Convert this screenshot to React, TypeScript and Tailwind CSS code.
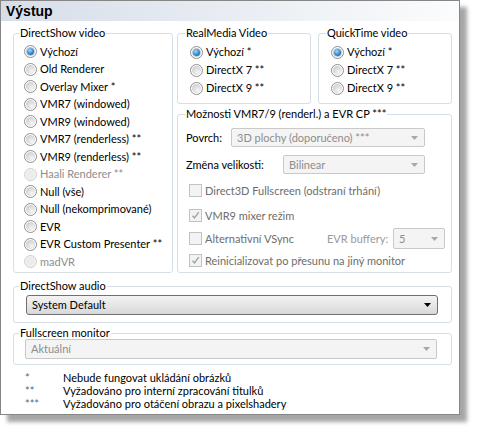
import clsx from "clsx";

function Radio({ label, checked, disabled, h = "h-[17.5px]" }: { label: string; checked?: boolean; disabled?: boolean; h?: string }) {
  return (
    <div className={clsx("flex items-center gap-[3px]", h)}>
      <span
        className={clsx(
          "flex h-[13px] w-[13px] shrink-0 items-center justify-center rounded-full border",
          disabled ? "border-[#cfcfcf] bg-[#f4f4f4]" : "border-[#8e8f8f] bg-white"
        )}
      >
        {checked ? (
          <span className="h-[7px] w-[7px] rounded-full bg-[radial-gradient(circle_at_40%_35%,#a6dcf7,#2f86cc_55%,#0d4c8e)] shadow-[0_0_0_1px_#b9c6d2]" />
        ) : (
          <span
            className={clsx(
              "h-[9px] w-[9px] rounded-full",
              disabled ? "bg-[#ececec]" : "bg-[radial-gradient(circle_at_65%_70%,#f6f6f6,#d2d2d2_70%,#c4c4c4)]"
            )}
          />
        )}
      </span>
      <span className={clsx("whitespace-nowrap", disabled ? "text-[#8d8d8d]" : "text-black")}>{label}</span>
    </div>
  );
}

function Check({ label, checked }: { label: string; checked?: boolean }) {
  return (
    <div className="flex h-[17px] items-center gap-[3px]">
      <span className="flex h-[13px] w-[13px] shrink-0 items-center justify-center border border-[#c2c2c2] bg-[#f3f3f3]">
        {checked && (
          <svg width="9" height="9" viewBox="0 0 9 9">
            <path d="M1.5 4.8 L3.5 7 L7.8 1.2" stroke="#a3a3a3" strokeWidth="1.4" fill="none" />
          </svg>
        )}
      </span>
      <span className="whitespace-nowrap text-[#6d6d6d]">{label}</span>
    </div>
  );
}

function Combo({ value, w, h = "h-[19px]", enabled }: { value: string; w: string; h?: string; enabled?: boolean }) {
  return (
    <div
      className={clsx(
        "flex items-center justify-between border pl-[5px] pr-[6px]",
        w,
        h,
        enabled
          ? "rounded-[3px] border-[#707070] bg-gradient-to-b from-[#f3f3f3] via-[#e6e6e6] to-[#d8d8d8] text-black"
          : "rounded-[2px] border-[#c9c9c9] bg-[#f4f4f4] text-[#8d8d8d]"
      )}
    >
      <span className="whitespace-nowrap">{value}</span>
      <svg width="7" height="4" viewBox="0 0 7 4">
        <path d="M0 0 H7 L3.5 4 Z" fill={enabled ? "#000" : "#a8a8a8"} />
      </svg>
    </div>
  );
}

export default function App() {
  return (
    <div className="h-[433px] w-[478px] bg-white font-['Lato',sans-serif] text-[11px] leading-[16px] text-black">
      <div className="h-[415px] w-[460px] border border-[#868686] bg-white shadow-[7px_7px_4px_rgba(0,0,0,0.35)]">
        <div className="flex h-[20px] items-center bg-gradient-to-r from-[#d6dee9] to-[#fbfcfd] pl-[5px] font-['Liberation_Sans',sans-serif] text-[14px] font-bold">
          Výstup
        </div>

        <div className="pl-[12px] pr-[7px] pt-[4px]">
          <div className="flex gap-[4px]">
            <fieldset className="w-[160px] rounded-[3px] border border-[#d5dfe5] p-0">
              <legend className="ml-[5px] px-[1px] leading-[16px]">DirectShow video</legend>
              <div className="mt-[2px] pl-[10px]">
                <Radio label="Výchozí" checked />
                <Radio label="Old Renderer" />
                <Radio label="Overlay Mixer *" />
                <Radio label="VMR7 (windowed)" />
                <Radio label="VMR9 (windowed)" />
                <Radio label="VMR7 (renderless) **" />
                <Radio label="VMR9 (renderless) **" />
                <Radio label="Haali Renderer **" disabled />
                <Radio label="Null (vše)" />
                <Radio label="Null (nekomprimované)" />
                <Radio label="EVR" />
                <Radio label="EVR Custom Presenter **" />
                <Radio label="madVR" disabled />
              </div>
            </fieldset>

            <div className="flex w-[275px] flex-col">
              <div className="flex gap-[7px]">
                <fieldset className="w-[134px] rounded-[3px] border border-[#d5dfe5] p-0 pb-[6px]">
                  <legend className="ml-[7px] px-[1px] leading-[16px]">RealMedia Video</legend>
                  <div className="mt-[2px] pl-[12px]">
                    <Radio h="h-[18px]" label="Výchozí *" checked />
                    <Radio h="h-[18px]" label="DirectX 7 **" />
                    <Radio h="h-[18px]" label="DirectX 9 **" />
                  </div>
                </fieldset>
                <fieldset className="w-[134px] rounded-[3px] border border-[#d5dfe5] p-0 pb-[6px]">
                  <legend className="ml-[7px] px-[1px] leading-[16px]">QuickTime video</legend>
                  <div className="mt-[2px] pl-[12px]">
                    <Radio h="h-[18px]" label="Výchozí *" checked />
                    <Radio h="h-[18px]" label="DirectX 7 **" />
                    <Radio h="h-[18px]" label="DirectX 9 **" />
                  </div>
                </fieldset>
              </div>

              <fieldset className="mt-[2px] flex-1 rounded-[3px] border border-[#d5dfe5] p-0 pb-[3px]">
                <legend className="ml-[7px] px-[1px] leading-[16px]">Možnosti VMR7/9 (renderl.) a EVR CP ***</legend>
                <div className="pl-[8px]">
                  <div className="mt-[6px] flex items-center">
                    <span className="w-[45px]">Povrch:</span>
                    <Combo value="3D plochy (doporučeno) ***" w="w-[194px]" />
                  </div>
                  <div className="mt-[8px] flex items-center">
                    <span className="w-[97px]">Změna velikosti:</span>
                    <Combo value="Bilinear" w="w-[142px]" />
                  </div>
                  <div className="ml-[3px]">
                    <div className="mt-[8px]">
                      <Check label="Direct3D Fullscreen (odstraní trhání)" />
                    </div>
                    <div className="mt-[8px]">
                      <Check label="VMR9 mixer režim" checked />
                    </div>
                    <div className="mt-[4px] flex h-[21px] items-center">
                      <div className="w-[138px]">
                        <Check label="Alternativní VSync" />
                      </div>
                      <span className="w-[66px] whitespace-nowrap text-[#9a9a9a]">EVR buffery:</span>
                      <Combo value="5" w="w-[52px]" h="h-[21px]" />
                    </div>
                    <div className="mt-[3px]">
                      <Check label="Reinicializovat po přesunu na jiný monitor" checked />
                    </div>
                  </div>
                </div>
              </fieldset>
            </div>
          </div>

          <fieldset className="mt-[5px] rounded-[3px] border border-[#d5dfe5] p-0 pb-[7px]">
            <legend className="ml-[5px] px-[1px] leading-[16px]">DirectShow audio</legend>
            <div className="mt-[1px] pl-[12px]">
              <Combo value="System Default" w="w-[412px]" h="h-[20px]" enabled />
            </div>
          </fieldset>

          <fieldset className="mt-[2px] rounded-[3px] border border-[#d5dfe5] p-0 pb-[5px]">
            <legend className="ml-[5px] px-[1px] leading-[16px]">Fullscreen monitor</legend>
            <div className="-mt-[2px] pl-[11px]">
              <Combo value="Aktuální" w="w-[412px]" h="h-[20px]" />
            </div>
          </fieldset>

          <div className="ml-[12px] mt-[6px] leading-[13px]">
            <div className="flex">
              <span className="w-[38px] text-[#4a6a9a]">*</span>
              <span>Nebude fungovat ukládání obrázků</span>
            </div>
            <div className="flex">
              <span className="w-[38px] text-[#4a6a9a]">**</span>
              <span>Vyžadováno pro interní zpracování titulků</span>
            </div>
            <div className="flex">
              <span className="w-[38px] text-[#4a6a9a]">***</span>
              <span>Vyžadováno pro otáčení obrazu a pixelshadery</span>
            </div>
          </div>
        </div>
      </div>
    </div>
  );
}
